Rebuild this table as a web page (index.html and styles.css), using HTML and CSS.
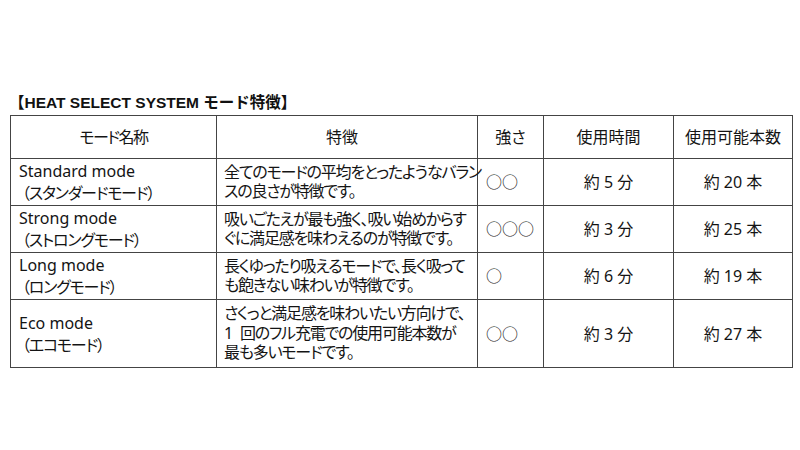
FILE: index.html
```html
<!DOCTYPE html>
<html lang="ja">
<head>
<meta charset="utf-8">
<title>HEAT SELECT SYSTEM モード特徴</title>
<link rel="stylesheet" href="styles.css">
</head>
<body>
<main class="page">
  <h1 class="title">【HEAT SELECT SYSTEM モード特徴】</h1>
  <div class="table">
    <div class="cell head head-kana">モード名称</div>
    <div class="cell head head-feature">特徴</div>
    <div class="cell head">強さ</div>
    <div class="cell head">使用時間</div>
    <div class="cell head">使用可能本数</div>

    <div class="cell name"><span>Standard mode</span><span class="jp">（スタンダードモード）</span></div>
    <div class="cell desc"><p>全てのモードの平均をとったようなバラン<br>スの良さが特徴です。</p></div>
    <div class="cell power">○○</div>
    <div class="cell num">約 5 分</div>
    <div class="cell num">約 20 本</div>

    <div class="cell name"><span>Strong mode</span><span class="jp">（ストロングモード）</span></div>
    <div class="cell desc"><p>吸いごたえが最も強く、吸い始めからす<br>ぐに満足感を味わえるのが特徴です。</p></div>
    <div class="cell power">○○○</div>
    <div class="cell num">約 3 分</div>
    <div class="cell num">約 25 本</div>

    <div class="cell name"><span>Long mode</span><span class="jp">（ロングモード）</span></div>
    <div class="cell desc"><p>長くゆったり吸えるモードで、長く吸って<br>も飽きない味わいが特徴です。</p></div>
    <div class="cell power">○</div>
    <div class="cell num">約 6 分</div>
    <div class="cell num">約 19 本</div>

    <div class="cell name"><span>Eco mode</span><span class="jp">（エコモード）</span></div>
    <div class="cell desc"><p>さくっと満足感を味わいたい方向けで、<br><span class="digit">1</span>回のフル充電での使用可能本数が<br>最も多いモードです。</p></div>
    <div class="cell power">○○</div>
    <div class="cell num">約 3 分</div>
    <div class="cell num">約 27 本</div>
  </div>
</main>
</body>
</html>
```

FILE: styles.css
```css
html, body {
  margin: 0;
  background: #ffffff;
}

body {
  font-family: "Noto Sans", "Noto Sans CJK JP", sans-serif;
  color: #141414;
}

.page {
  width: 783px;
  padding: 93px 0 0 10px;
}

.title {
  margin: 0 0 2px -1px;
  font: bold 15.5px/20px "Liberation Sans", "Noto Sans CJK JP", sans-serif;
  color: #111;
}

.table {
  display: grid;
  grid-template-columns: 206px 261px 66px 130px 119px;
  grid-template-rows: 43px 47px 47px 47px 68px;
  border-top: 1px solid #444;
  border-left: 1px solid #444;
}

.cell {
  display: flex;
  flex-direction: column;
  justify-content: center;
  border-right: 1px solid #444;
  border-bottom: 1px solid #444;
  font-size: 16px;
  line-height: 20px;
  white-space: nowrap;
  font-feature-settings: "palt";
}

.head {
  align-items: center;
}

.head-kana {
  letter-spacing: -1.5px;
}

.head-feature {
  padding-right: 10px;
}

.name {
  padding-left: 8px;
  line-height: 22px;
}

.name .jp {
  margin-left: 3px;
  letter-spacing: -1.2px;
}

.desc {
  padding-left: 7px;
  line-height: 19.5px;
}

.desc p {
  margin: 0;
  letter-spacing: -1.2px;
}

.desc .digit {
  margin-right: 8px;
}

.power {
  padding-left: 8px;
}

.num {
  align-items: center;
}
```
